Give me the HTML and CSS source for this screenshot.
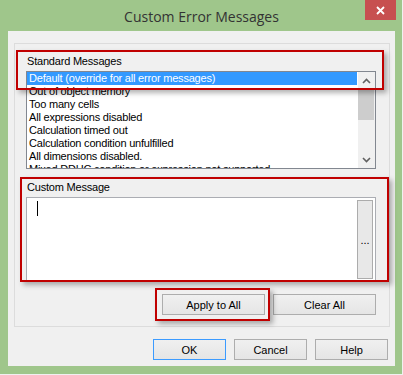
FILE: index.html
```html
<!DOCTYPE html>
<html lang="en">
<head>
    <meta charset="UTF-8">
    <title>Custom Error Messages</title>
    <link rel="stylesheet" href="styles.css">
</head>
<body>
    <div class="window">
        <div class="titlebar">
            <span class="title">Custom Error Messages</span>
            <div class="close-btn">
                <svg width="9" height="9" viewBox="0 0 9 9">
                    <path d="M1 1 L8 8 M8 1 L1 8" stroke="#fff" stroke-width="1.8" fill="none"/>
                </svg>
            </div>
        </div>

        <div class="client">
            <div class="group">
                <div class="label">Standard Messages</div>
                <div class="listbox">
                    <ul class="items">
                        <li class="selected">Default (override for all error messages)</li>
                        <li>Out of object memory</li>
                        <li>Too many cells</li>
                        <li>All expressions disabled</li>
                        <li>Calculation timed out</li>
                        <li>Calculation condition unfulfilled</li>
                        <li>All dimensions disabled.</li>
                        <li>Mixed DDHC condition or expression not supported</li>
                    </ul>
                    <div class="vscroll">
                        <div class="arrow">
                            <svg width="9" height="6" viewBox="0 0 9 6"><path d="M1 5 L4.5 1.5 L8 5" stroke="#606060" stroke-width="1.6" fill="none"/></svg>
                        </div>
                        <div class="thumb"></div>
                        <div class="arrow down">
                            <svg width="9" height="6" viewBox="0 0 9 6"><path d="M1 1 L4.5 4.5 L8 1" stroke="#606060" stroke-width="1.6" fill="none"/></svg>
                        </div>
                    </div>
                </div>

                <div class="label label-custom">Custom Message</div>
                <div class="textbox">
                    <span class="caret"></span>
                    <button class="browse-btn">...</button>
                </div>

                <div class="button-row group-buttons">
                    <button class="btn wide">Apply to All</button>
                    <button class="btn wide">Clear All</button>
                </div>
            </div>

            <div class="button-row dialog-buttons">
                <button class="btn default">OK</button>
                <button class="btn">Cancel</button>
                <button class="btn">Help</button>
            </div>
        </div>

        <!-- red callouts drawn over the dialog -->
        <div class="callout callout-standard"></div>
        <div class="callout callout-custom"></div>
        <div class="callout callout-apply"></div>
    </div>
</body>
</html>
```

FILE: styles.css
```css
* {
    margin: 0;
    padding: 0;
    box-sizing: border-box;
}

body {
    background: #f0f0f0;
    font-family: 'Liberation Sans', Arial, sans-serif;
    font-size: 11px;
    color: #000;
}

.window {
    position: relative;
    width: 402px;
    height: 374px;
    background: #9fc68b;
    padding: 0 7px 8px 8px;
    display: flex;
    flex-direction: column;
}

.titlebar {
    height: 31px;
    display: flex;
    justify-content: center;
    align-items: center;
}

.title {
    font-family: 'Open Sans', 'Noto Sans', sans-serif;
    font-size: 14px;
    color: #333;
    padding-top: 1px;
}

.close-btn {
    position: absolute;
    top: 0;
    left: 365px;
    width: 31px;
    height: 20px;
    background: #c75050;
    display: flex;
    align-items: center;
    justify-content: center;
}

.close-btn svg {
    display: block;
}

.client {
    flex: 1;
    background: #f0f0f0;
    padding: 12px 5px 6px 6px;
    display: flex;
    flex-direction: column;
}

.group {
    border: 1px solid #dcdcdc;
    padding: 11px 13px 11px 11px;
}

.label {
    line-height: 13px;
    height: 13px;
    padding-left: 1px;
    letter-spacing: -0.2px;
}

.label-custom {
    margin-top: 12px;
}

.listbox {
    margin-top: 3px;
    height: 98px;
    border: 1px solid #828790;
    background: #fff;
    display: flex;
    overflow: hidden;
}

.items {
    list-style: none;
    flex: 1;
    margin-right: 1px;
}

.items li {
    height: 13px;
    line-height: 13px;
    padding-left: 2px;
    white-space: nowrap;
    overflow: hidden;
    letter-spacing: -0.2px;
}

.items li.selected {
    background: #3399ff;
    color: #fff;
}

.vscroll {
    width: 17px;
    background: #f0f0f0;
    display: flex;
    flex-direction: column;
}

.vscroll .arrow {
    height: 17px;
    display: flex;
    align-items: center;
    justify-content: center;
}

.vscroll .arrow.down {
    margin-top: auto;
}

.vscroll svg {
    display: block;
}

.thumb {
    height: 31px;
    margin: 0 1px 0 0;
    background: #cdcdcd;
}

.textbox {
    margin-top: 3px;
    height: 85px;
    border: 1px solid #abadb3;
    background: #fff;
    padding: 2px;
    display: flex;
}

.caret {
    width: 1px;
    height: 15px;
    margin: 1px 0 0 8px;
    background: #000;
}

.browse-btn {
    margin-left: auto;
    width: 16px;
    border: 1px solid #acacac;
    background: #e8e8e8;
    font-family: inherit;
    font-size: 11px;
    line-height: 8px;
    color: #000;
}

.button-row {
    display: flex;
    justify-content: flex-end;
    gap: 8px;
}

.group-buttons {
    margin-top: 12px;
}

.dialog-buttons {
    margin-top: 12px;
    padding-right: 2px;
}

.btn {
    width: 73px;
    height: 21px;
    border: 1px solid #adadad;
    background: linear-gradient(#f0f0f0, #e5e5e5);
    font-family: inherit;
    font-size: 11px;
    color: #000;
}

.btn.wide {
    width: 103px;
}

.btn.default {
    border-color: #3c9bff;
}

/* red highlight boxes */
.callout {
    position: absolute;
    border: 2px solid #c00000;
    box-shadow: 3px 3px 5px rgba(0, 0, 0, 0.3);
}

.callout-standard {
    left: 16px;
    top: 50px;
    width: 368px;
    height: 40px;
}

.callout-custom {
    left: 20px;
    top: 177px;
    width: 369px;
    height: 105px;
}

.callout-apply {
    left: 155px;
    top: 288px;
    width: 115px;
    height: 33px;
}
```
